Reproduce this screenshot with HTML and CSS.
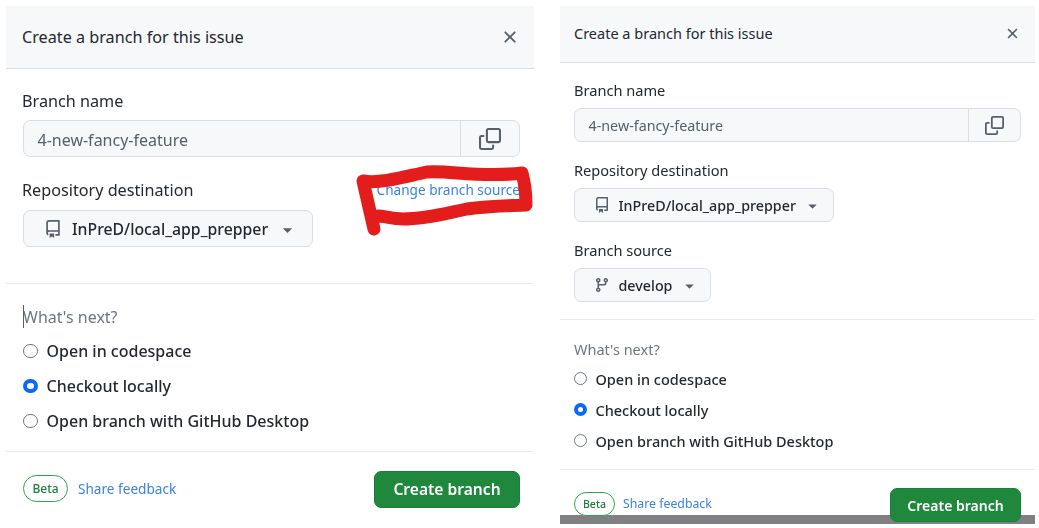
FILE: index.html
```html
<!DOCTYPE html>
<html lang="en">
<head>
<meta charset="utf-8">
<title>Create a branch for this issue</title>
<link rel="stylesheet" href="styles.css">
</head>
<body>
<svg class="sprite" aria-hidden="true">
  <symbol id="i-x" viewBox="0 0 16 16"><path d="M3.72 3.72a.75.75 0 0 1 1.06 0L8 6.94l3.22-3.22a.749.749 0 0 1 1.275.326.749.749 0 0 1-.215.734L9.06 8l3.22 3.22a.749.749 0 0 1-.326 1.275.749.749 0 0 1-.734-.215L8 9.06l-3.22 3.22a.751.751 0 0 1-1.042-.018.751.751 0 0 1-.018-1.042L6.94 8 3.72 4.78a.75.75 0 0 1 0-1.06Z"/></symbol>
  <symbol id="i-copy" viewBox="0 0 16 16"><path d="M0 6.75C0 5.784.784 5 1.75 5h1.5a.75.75 0 0 1 0 1.5h-1.5a.25.25 0 0 0-.25.25v7.5c0 .138.112.25.25.25h7.5a.25.25 0 0 0 .25-.25v-1.5a.75.75 0 0 1 1.5 0v1.5A1.75 1.75 0 0 1 9.25 16h-7.5A1.75 1.75 0 0 1 0 14.25Z"/><path d="M5 1.75C5 .784 5.784 0 6.75 0h7.5C15.216 0 16 .784 16 1.75v7.5A1.75 1.75 0 0 1 14.25 11h-7.5A1.75 1.75 0 0 1 5 9.25Zm1.75-.25a.25.25 0 0 0-.25.25v7.5c0 .138.112.25.25.25h7.5a.25.25 0 0 0 .25-.25v-7.5a.25.25 0 0 0-.25-.25Z"/></symbol>
  <symbol id="i-repo" viewBox="0 0 16 16"><path d="M2 2.5A2.5 2.5 0 0 1 4.5 0h8.75a.75.75 0 0 1 .75.75v12.5a.75.75 0 0 1-.75.75h-2.5a.75.75 0 0 1 0-1.5h1.75v-2h-8a1 1 0 0 0-.714 1.7.75.75 0 1 1-1.072 1.05A2.495 2.495 0 0 1 2 11.5Zm10.5-1h-8a1 1 0 0 0-1 1v6.708A2.486 2.486 0 0 1 4.5 9h8ZM5 12.25a.25.25 0 0 1 .25-.25h3.5a.25.25 0 0 1 .25.25v3.25a.25.25 0 0 1-.4.2l-1.45-1.087a.249.249 0 0 0-.3 0L5.4 15.7a.25.25 0 0 1-.4-.2Z"/></symbol>
  <symbol id="i-branch" viewBox="0 0 16 16"><path d="M9.5 3.25a2.25 2.25 0 1 1 3 2.122V6A2.5 2.5 0 0 1 10 8.5H6a1 1 0 0 0-1 1v1.128a2.251 2.251 0 1 1-1.5 0V5.372a2.25 2.25 0 1 1 1.5 0v1.836A2.493 2.493 0 0 1 6 7h4a1 1 0 0 0 1-1v-.628A2.25 2.25 0 0 1 9.5 3.25Zm-6 0a.75.75 0 1 0 1.5 0 .75.75 0 0 0-1.5 0Zm8.25-.75a.75.75 0 1 0 0 1.5.75.75 0 0 0 0-1.5ZM4.25 12a.75.75 0 1 0 0 1.5.75.75 0 0 0 0-1.5Z"/></symbol>
  <symbol id="i-caret" viewBox="0 0 16 16"><path d="m4.427 7.427 3.396 3.396a.25.25 0 0 0 .354 0l3.396-3.396A.25.25 0 0 0 11.396 7H4.604a.25.25 0 0 0-.177.427Z"/></symbol>
</svg>

<main class="canvas">
  <section class="panel panel-large">
    <header class="panel-head">
      <h2 class="panel-title">Create a branch for this issue</h2>
      <svg class="icon icon-close"><use href="#i-x"/></svg>
    </header>
    <div class="fields">
      <div class="label-row"><span class="label">Branch name</span></div>
      <div class="input-group">
        <span class="input-value">4-new-fancy-feature</span>
        <span class="copy-btn"><svg class="icon icon-copy"><use href="#i-copy"/></svg></span>
      </div>
      <div class="label-row">
        <span class="label">Repository destination</span>
        <a class="link link-source" href="#">Change branch source</a>
      </div>
      <button class="select" type="button">
        <svg class="icon icon-lead"><use href="#i-repo"/></svg>
        <span>InPreD/local_app_prepper</span>
        <svg class="icon icon-caret"><use href="#i-caret"/></svg>
      </button>
    </div>
    <div class="next">
      <div class="next-title"><span class="caret-bar"></span>What's next?</div>
      <label class="radio-row"><input class="radio" type="radio" name="a">Open in codespace</label>
      <label class="radio-row"><input class="radio" type="radio" name="a" checked>Checkout locally</label>
      <label class="radio-row"><input class="radio" type="radio" name="a">Open branch with GitHub Desktop</label>
    </div>
    <footer class="panel-foot">
      <span class="beta">Beta</span>
      <a class="link link-feedback" href="#">Share feedback</a>
      <button class="create" type="button">Create branch</button>
    </footer>
    <svg class="scribble" viewBox="0 0 170 80" aria-hidden="true">
      <path d="M12 65 L1 17 C20 20 45 12 65 8 C85 6 120 14 160 9 C163 20 164 30 164 41 C140 42 125 42 105 45 C85 49 65 55 41 55 C30 55 22 52 16 52"/>
    </svg>
  </section>

  <section class="panel panel-small">
    <header class="panel-head">
      <h2 class="panel-title">Create a branch for this issue</h2>
      <svg class="icon icon-close"><use href="#i-x"/></svg>
    </header>
    <div class="fields">
      <div class="label-row"><span class="label">Branch name</span></div>
      <div class="input-group">
        <span class="input-value">4-new-fancy-feature</span>
        <span class="copy-btn"><svg class="icon icon-copy"><use href="#i-copy"/></svg></span>
      </div>
      <div class="label-row"><span class="label">Repository destination</span></div>
      <button class="select" type="button">
        <svg class="icon icon-lead"><use href="#i-repo"/></svg>
        <span>InPreD/local_app_prepper</span>
        <svg class="icon icon-caret"><use href="#i-caret"/></svg>
      </button>
      <div class="label-row"><span class="label">Branch source</span></div>
      <button class="select" type="button">
        <svg class="icon icon-lead"><use href="#i-branch"/></svg>
        <span>develop</span>
        <svg class="icon icon-caret"><use href="#i-caret"/></svg>
      </button>
    </div>
    <div class="next">
      <div class="next-title">What's next?</div>
      <label class="radio-row"><input class="radio" type="radio" name="b">Open in codespace</label>
      <label class="radio-row"><input class="radio" type="radio" name="b" checked>Checkout locally</label>
      <label class="radio-row"><input class="radio" type="radio" name="b">Open branch with GitHub Desktop</label>
    </div>
    <footer class="panel-foot">
      <span class="beta">Beta</span>
      <a class="link link-feedback" href="#">Share feedback</a>
      <button class="create" type="button">Create branch</button>
    </footer>
    <div class="shade"></div>
  </section>
</main>
</body>
</html>
```
FILE: styles.css
```css
* { box-sizing: border-box; }
html, body { margin: 0; height: 100%; background: #fff; overflow: hidden; }
body { font-family: "Noto Sans", "Open Sans", sans-serif; color: #24292f; }
.sprite { display: none; }

.canvas { display: flex; gap: 26px; padding: 6px 0 0 6px; filter: blur(0.35px); }

.panel { position: relative; }
.panel-large {
  width: 528px;
  --head-h: 63px; --head-shift: 1px; --head-left: 16px; --head-right: 14px;
  --pad: 17px; --title: 16.2px; --label: 16.2px; --text: 16px; --value: 16px; --sel: 15.8px; --small: 13.6px;
  --close: 20px; --copy: 22px; --lead: 18px; --caret: 19px;
  --fields-top: 20px; --label-h: 24px; --label-gap: 7px; --control-h: 37px; --row-gap: 21.5px; --label-lift: 2px;
  --fields-bot: 36px; --copy-w: 59px; --select-pad: 20px; --select-end: 15px; --select-gap: 10px; --value-shift: 2px;
  --next-top: 21px; --next-title-h: 24px; --next-gap: 5px; --radio-row: 35px; --next-bot: 12px;
  --radio: 14.5px; --radio-gap: 9px; --label-nudge: -1px;
  --foot-top: 19px; --beta-w: 45px; --beta-h: 27px; --beta-font: 12px; --foot-gap: 10px;
  --btn-w: 146px; --btn-font: 15.6px; --right: 14px;
}
.panel-small {
  width: 475px;
  --head-h: 57px; --head-shift: 2px; --head-left: 14px; --head-right: 14px;
  --pad: 14px; --title: 14.5px; --label: 14.6px; --text: 14.5px; --value: 14.3px; --sel: 14.3px; --small: 12.3px;
  --close: 17px; --copy: 19px; --lead: 16px; --caret: 17px;
  --fields-top: 15px; --label-h: 24px; --label-gap: 6px; --control-h: 34px; --row-gap: 16px; --label-lift: 0px;
  --fields-bot: 17px; --copy-w: 52px; --select-pad: 19px; --select-end: 12px; --select-gap: 8.5px; --value-shift: 0px;
  --next-top: 17px; --next-title-h: 24px; --next-gap: 2px; --radio-row: 31px; --next-bot: 13px;
  --radio: 13px; --radio-gap: 8.5px; --label-nudge: 0px;
  --foot-top: 18px; --beta-w: 41px; --beta-h: 24px; --beta-font: 10.6px; --foot-gap: 8px;
  --btn-w: 131px; --btn-font: 14px; --right: 14px;
}

.panel-head {
  height: var(--head-h);
  display: flex; align-items: center; justify-content: space-between;
  padding: 0 var(--head-right) var(--head-shift) var(--head-left);
  background: #f6f8fa;
  border-bottom: 1px solid #d8dee4;
}
.panel-title { margin: 0; font-size: var(--title); font-weight: 400; color: #24292f; }
.icon { display: block; fill: currentColor; flex: none; }
.icon-close { width: var(--close); height: var(--close); color: #57606a; }

.fields {
  padding: var(--fields-top) var(--right) var(--fields-bot) var(--pad);
  border-bottom: 1px solid #e8eaee;
}
.label-row {
  display: flex; align-items: center; justify-content: space-between;
  height: var(--label-h); margin-bottom: var(--label-gap);
  margin-top: var(--row-gap);
  padding-bottom: var(--label-lift);
}
.label-row:first-child { margin-top: 0; padding-bottom: 0; }
.label { font-size: var(--label); color: #24292f; margin-left: var(--label-nudge); }
.link { color: #3b82e6; text-decoration: none; }
.link-source { font-size: var(--small); }

.input-group {
  display: flex; height: var(--control-h);
  background: #f6f8fa; border: 1px solid #d8dee4; border-radius: 7px;
}
.input-value {
  flex: 1; display: flex; align-items: center;
  padding: var(--value-shift) 0 0 13.5px; font-size: var(--value); color: #57606a;
}
.copy-btn {
  width: var(--copy-w); display: flex; align-items: center; justify-content: center;
  border-left: 1px solid #d8dee4; color: #57606a;
}
.icon-copy { width: var(--copy); height: var(--copy); }

.select {
  display: inline-flex; align-items: center; height: var(--control-h);
  padding: var(--value-shift) var(--select-end) 0 var(--select-pad); gap: var(--select-gap);
  background: #f6f8fa; border: 1px solid #d8dee4; border-radius: 7px;
  font: inherit; font-size: var(--sel); font-weight: 500; color: #24292f;
  vertical-align: top;
}
.icon-lead { width: var(--lead); height: var(--lead); color: #57606a; }
.icon-caret { width: var(--caret); height: var(--caret); color: #57606a; }

.next {
  padding: var(--next-top) var(--right) var(--next-bot) var(--pad);
  border-bottom: 1px solid #e8eaee;
}
.next-title {
  position: relative;
  height: var(--next-title-h); line-height: var(--next-title-h);
  margin-bottom: var(--next-gap);
  font-size: var(--text); color: #6e7781;
}
.caret-bar {
  position: absolute; left: 0; top: 0; width: 1px; height: 23px; background: #57606a;
}
.radio-row {
  display: flex; align-items: center; gap: var(--radio-gap);
  height: var(--radio-row);
  font-size: var(--text); font-weight: 500; color: #24292f;
}
.radio {
  appearance: none; margin: 0; flex: none;
  width: var(--radio); height: var(--radio);
  border: 1px solid #6e7781; border-radius: 50%; background: #fff;
}
.radio:checked { border: 4px solid #0969ff; }

.panel-foot {
  position: relative; z-index: 1;
  display: flex; align-items: flex-start;
  padding: var(--foot-top) var(--right) 0 var(--pad);
}
.beta {
  width: var(--beta-w); height: var(--beta-h); margin-top: 4px;
  display: flex; align-items: center; justify-content: center;
  border: 1px solid #2da44e; border-radius: 14px; background: #fff;
  font-size: var(--beta-font); font-weight: 500; color: #1a7f37;
}
.link-feedback {
  margin-left: var(--foot-gap); margin-top: 4px;
  line-height: var(--beta-h); font-size: var(--small);
}
.create {
  margin-left: auto; width: var(--btn-w); height: var(--control-h);
  background: #1f883d; border: 1px solid #1a7f37; border-radius: 7px;
  font: inherit; font-size: var(--btn-font); font-weight: 600; color: #fff;
}
.scribble {
  position: absolute; left: 356px; top: 158px; width: 170px; height: 80px;
  overflow: visible; pointer-events: none;
}
.scribble path {
  fill: none; stroke: #e31c1c; stroke-width: 13; stroke-linecap: round; stroke-linejoin: round;
}
.shade {
  position: absolute; left: 0; right: 0; top: 509px; height: 9px;
  background: #808083;
}
```
